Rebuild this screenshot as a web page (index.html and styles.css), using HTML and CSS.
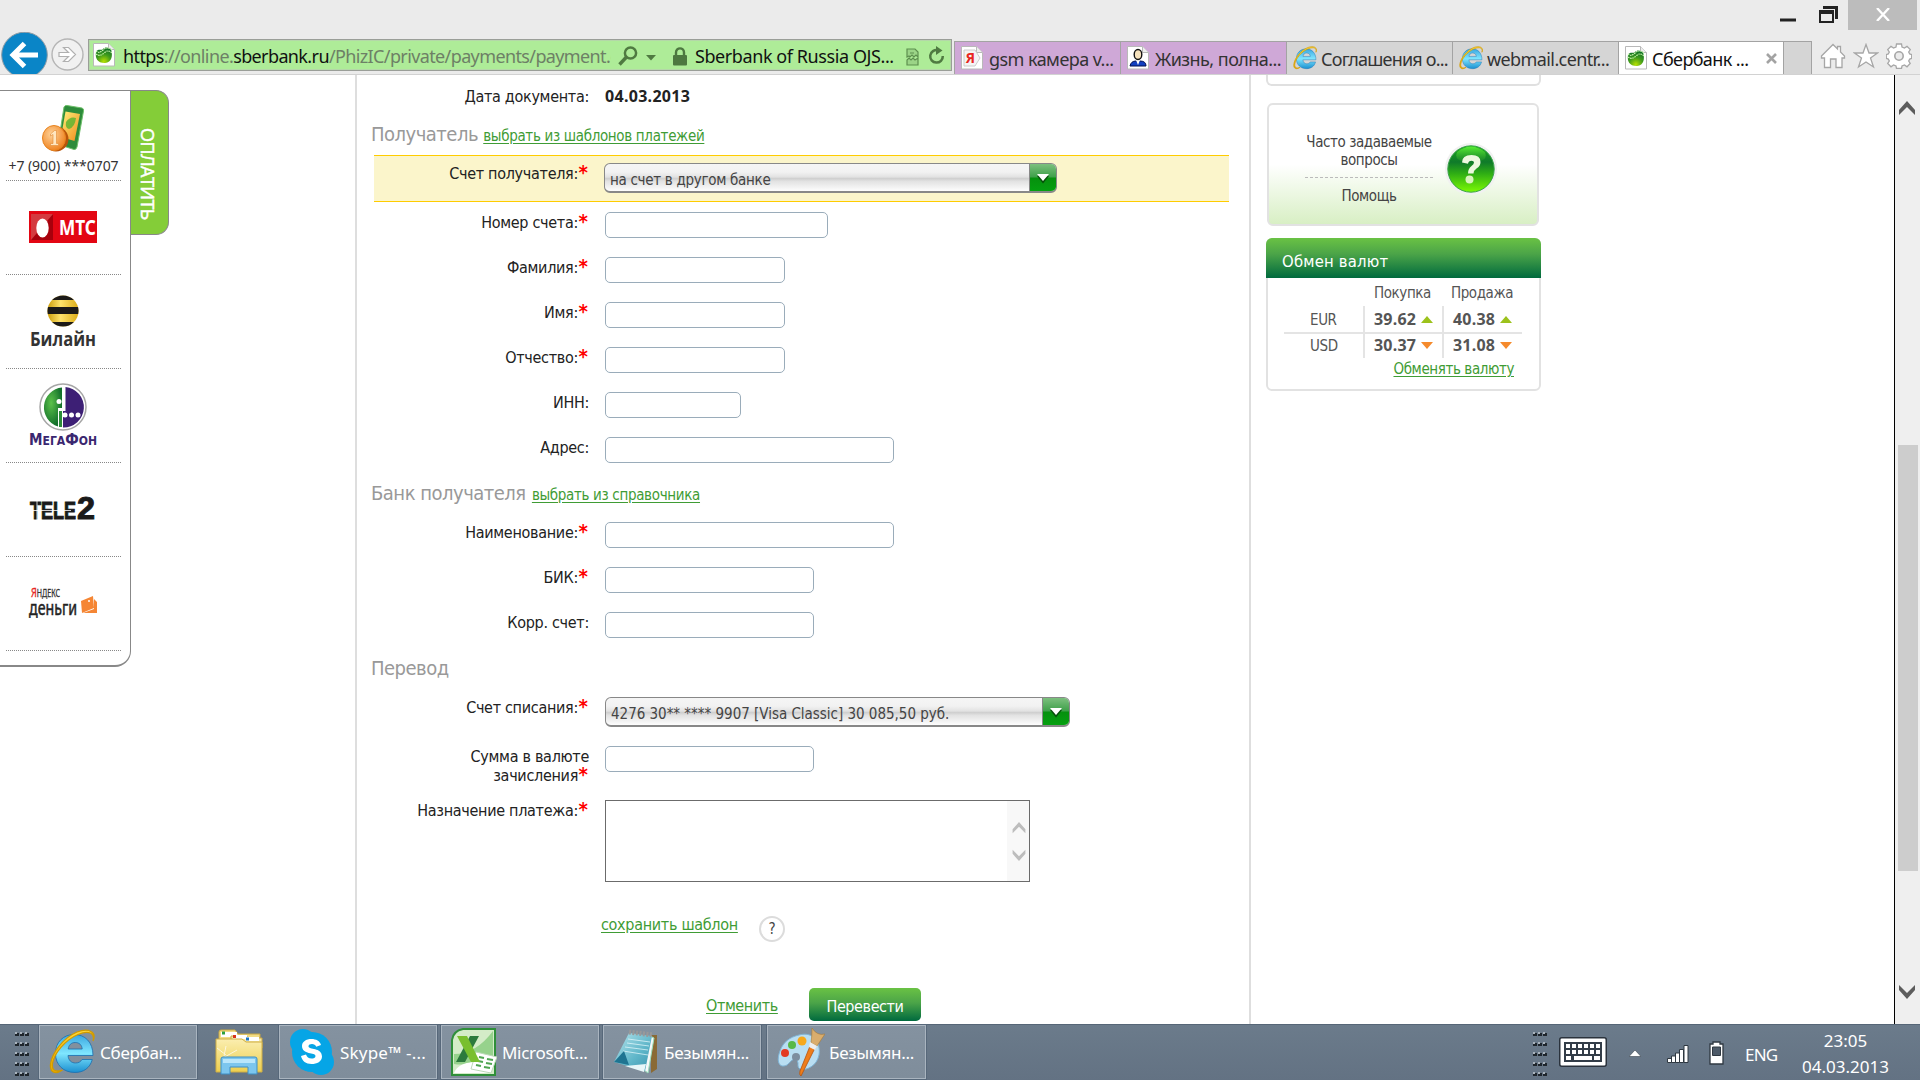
FILE: index.html
```html
<!DOCTYPE html>
<html lang="ru">
<head>
<meta charset="utf-8">
<title>Сбербанк ОнЛ@йн</title>
<link rel="stylesheet" href="styles.css">
</head>
<body>
<svg class="defs" width="0" height="0">
  <defs>
    <linearGradient id="gBlue" x1="0" y1="0" x2="0" y2="1"><stop offset="0" stop-color="#3aa6e0"/><stop offset=".5" stop-color="#7fe6ff"/><stop offset="1" stop-color="#1b8fd0"/></linearGradient>
    <linearGradient id="gGold" x1="0" y1="0" x2="0" y2="1"><stop offset="0" stop-color="#ffd83a"/><stop offset="1" stop-color="#e9a800"/></linearGradient>
    <radialGradient id="gBall" cx=".5" cy=".9" r=".9"><stop offset="0" stop-color="#b6e000"/><stop offset=".5" stop-color="#3f9b1c"/><stop offset="1" stop-color="#0c6b2a"/></radialGradient>
    <linearGradient id="gHelp" x1="0" y1="0" x2="0" y2="1"><stop offset="0" stop-color="#1fa81c"/><stop offset=".35" stop-color="#0f7a2a"/><stop offset=".6" stop-color="#2fae14"/><stop offset="1" stop-color="#7cfa05"/></linearGradient>
    <linearGradient id="gShine" x1="0" y1="0" x2="0" y2="1"><stop offset="0" stop-color="#58ee35"/><stop offset="1" stop-color="#2b9a2a" stop-opacity=".4"/></linearGradient>
    <linearGradient id="gFolder" x1="0" y1="0" x2="0" y2="1"><stop offset="0" stop-color="#fbeeb0"/><stop offset="1" stop-color="#edcf4f"/></linearGradient>
    <linearGradient id="gPad" x1="0" y1="0" x2="1" y2="1"><stop offset="0" stop-color="#b9e6ee"/><stop offset=".6" stop-color="#5fb6c9"/><stop offset="1" stop-color="#3a93ae"/></linearGradient>
    <linearGradient id="gPhone" x1="0" y1="0" x2="1" y2="1"><stop offset="0" stop-color="#fff27a"/><stop offset="1" stop-color="#f08a1d"/></linearGradient>
    <radialGradient id="gCoin" cx=".4" cy=".35" r=".7"><stop offset="0" stop-color="#ffd39a"/><stop offset="1" stop-color="#ee7f1a"/></radialGradient>
    <linearGradient id="gBee" x1="0" y1="0" x2="1" y2="0"><stop offset="0" stop-color="#c99a08"/><stop offset=".4" stop-color="#ffe36b"/><stop offset="1" stop-color="#d6a40c"/></linearGradient>
    <radialGradient id="gGreenM" cx=".4" cy=".4" r=".6"><stop offset="0" stop-color="#5cc24a"/><stop offset="1" stop-color="#13702b"/></radialGradient>
    <symbol id="ie" viewBox="0 0 46 46">
      <path d="M25 5.500C36 5.500 44 13 44 26.500H19c.4 5 3.500 7.500 7.500 7.500 3.300 0 5.300-1.400 6.500-3.500h10.300C41 39 34.500 43.500 26 43.500 14.500 43.500 6.500 36 6.500 24.500S14.500 5.500 25 5.500zM19.200 20h14c-.4-4.200-3-6.500-7-6.500s-6.600 2.500-7 6.500z" fill="url(#gBlue)" stroke="#1a6fb0" stroke-width=".8"/>
      <path d="M44 12C46 4 40 1 29 5.500 16 11 5.500 24 3.500 34.500 2.500 41 6 43.500 13.500 41 6 46 .5 43.500 1.500 35 3 24 14 9 28 3 40-1.500 48 3 44 12z" fill="url(#gGold)" stroke="#d09a00" stroke-width="1.200"/>
    </symbol>
    <symbol id="doc" viewBox="0 0 22 24"><path d="M.5.500h15l6 6v16.500H.5z" fill="#fff" stroke="#b9b9b9"/><path d="M15.500.500v6h6" fill="#eee" stroke="#b9b9b9"/></symbol>
    <symbol id="sb" viewBox="0 0 22 24"><use href="#doc"/><path d="M3 9c2-4 5-1 7-3s5-2 8 0c2 7 1 13-6 14C4 20 2 15 3 9z" fill="url(#gBall)"/><path d="M3 8q3 3 7-1t9 0M3 11q4 3 8-1t8 0" stroke="#cdf7b0" stroke-width="1.200" stroke-dasharray="1.500 .8" fill="none"/></symbol>
    <symbol id="chev" viewBox="0 0 18 15"><path d="M1 14v-5L9 0l8 9v5L9 6z"/></symbol>
    <symbol id="grip" viewBox="0 0 15 46">
      <g fill="#1f262d"><path id="gr" d="M0 2h4v3H0zm5 0h4v3H5zm5 0h4v3h-4z"/><use href="#gr" y="10"/><use href="#gr" y="20"/><use href="#gr" y="30"/><use href="#gr" y="40"/></g>
      <g fill="#a9b3bd"><path id="gl" d="M0 1h2v2H0zm5 0h2v2H5zm5 0h2v2h-2z"/><use href="#gl" y="10"/><use href="#gl" y="20"/><use href="#gl" y="30"/><use href="#gl" y="40"/></g>
    </symbol>
  </defs>
</svg>

<header class="chrome">
  <div class="titlebar">
    <svg class="min" width="16" height="4"><path d="M0 .500h16v3H0z" fill="#222"/></svg>
    <svg class="max" width="19" height="17"><path d="M4 0h15v13h-3V3H4zM0 4h15v13H0zm2 4v7h11V8z" fill="#222" fill-rule="evenodd"/></svg>
    <div class="close"><svg width="14" height="13"><path d="M1 0l12 13M13 0L1 13" stroke="#fff" stroke-width="2.300"/></svg></div>
  </div>
  <div class="navbar">
    <svg class="back" width="47" height="42" viewBox="0 0 47 42"><circle cx="23.500" cy="23" r="22.800" fill="#0a85c7" stroke="#8d9ba5"/><path d="M12 23h25M23.500 11.500L12 23l11.500 11.500" fill="none" stroke="#fff" stroke-width="5"/></svg>
    <svg class="fwd" width="33" height="33" viewBox="0 0 33 33"><circle cx="16.500" cy="16.500" r="15.500" fill="#f1f1f1" stroke="#b5b5b5" stroke-width="1.400"/><path d="M8 14.500h9.500L12.500 9.500h5l7 7-7 7h-5l5-5H8z" fill="#fff" stroke="#b0b0b0" stroke-width="1.200"/></svg>
    <div class="address">
      <svg class="fav" width="22" height="24"><use href="#sb"/></svg>
      <div class="url"><b>https</b>://online.<b>sberbank.ru</b>/PhizIC/private/payments/payment.do</div>
      <svg class="mag" width="20" height="20" viewBox="0 0 20 20"><circle cx="12.500" cy="7" r="5.600" fill="none" stroke="#4f7a41" stroke-width="2.500"/><path d="M8.500 11L1.500 18.500" stroke="#4f7a41" stroke-width="3.400"/></svg>
      <svg class="dd" width="10" height="6"><path d="M0 0h10L5 5.500z" fill="#4f7a41"/></svg>
      <svg class="lock" width="16" height="19" viewBox="0 0 16 19"><path d="M4 9V5.500C4 0 12 0 12 5.500V9" fill="none" stroke="#4d7840" stroke-width="2.400"/><rect x="1" y="8" width="14" height="10.500" rx="1" fill="#4d7840"/></svg>
      <span class="cert">Sberbank of Russia OJS...</span>
      <svg class="compat" width="13" height="18" viewBox="0 0 13 18"><path d="M1 9V1h8l3 3v5l-2-2-2 2-2-2-2 2-1-1zM1 17v-5l2-2 2 2 2-2 2 2 3-2v7z" fill="#9bd487" stroke="#5d8f4e" stroke-width="1.200"/><path d="M4 5h4" stroke="#5d8f4e"/></svg>
      <svg class="reload" width="17" height="19" viewBox="0 0 17 19"><path d="M10 4.200A6.300 6.300 0 1 0 14.800 10" fill="none" stroke="#4f7a41" stroke-width="2.500"/><path d="M8 0l6.500 4.500L8 9z" fill="#4f7a41"/></svg>
    </div>
    <nav class="tabs">
      <div class="tab violet t1"><svg width="22" height="24"><use href="#doc"/><path d="M3 4h11l5 8-5 8H3z" fill="#f4f4f4" stroke="#ccc"/><text x="4.500" y="17" class="ya">Я</text></svg><span>gsm камера v...</span></div>
      <div class="tab violet t2"><svg width="22" height="24"><use href="#doc"/><path d="M3 20q1-5 6-5h4q6 0 6 5z" fill="#1140c0" stroke="#001050"/><path d="M9 14h4l-2 5z" fill="#fff"/><ellipse cx="11" cy="8.500" rx="3.800" ry="5" fill="#f6e2bd" stroke="#111" stroke-width="1.400"/></svg><span>Жизнь, полна...</span></div>
      <div class="tab t3"><svg width="24" height="24"><use href="#ie"/></svg><span>Соглашения о...</span></div>
      <div class="tab t4"><svg width="24" height="24"><use href="#ie"/></svg><span>webmail.centr...</span></div>
      <div class="tab active t5"><svg width="22" height="24"><use href="#sb"/></svg><span>Сбербанк ...</span><svg class="tx" width="11" height="11"><path d="M1 1l9 9M10 1l-9 9" stroke="#a3a3a3" stroke-width="2.600"/></svg></div>
      <div class="tab newtab"></div>
    </nav>
    <div class="tools">
      <svg width="26" height="26" viewBox="0 0 26 26"><path d="M1.500 13L13 1.500l4.500 4.500V3.500h3V9l4 4v2h-2.500v9.500h-6V16h-5.500v8.500h-6V15h-3z" fill="#fff" stroke="#a6a6a6" stroke-width="1.300"/></svg>
      <svg width="26" height="26" viewBox="0 0 26 26"><path d="M13 1.500l3 8.500h8.500l-7 5 3 9L13 19l-7.500 5 3-9-7-5H10z" fill="#fff" stroke="#a6a6a6" stroke-width="1.300"/></svg>
      <svg width="26" height="26" viewBox="-13 -13 26 26"><path d="M-2.500-12h5l.5 3 2.500 1 2.500-1.700 3.300 3.300L9.700-4l1 2 2 .500v4l-2 .500-1 2 1.500 2.500L8 10.800 5.500 9 3 10l-.5 2.500h-5L-3 10l-2.500-1-2.500 1.800-3.300-3.300L-9.700 5l-1-2-2-.500v-4l2-.500 1-2-1.600-2.400L-8-9.700-5.500-8-3-9z" fill="#fff" stroke="#a6a6a6" stroke-width="1.300"/><circle r="4.200" fill="#ebebeb" stroke="#a6a6a6" stroke-width="1.600"/></svg>
    </div>
  </div>
</header>

<main class="view">
  <div class="left">
    <div class="pay">
      <div class="op first">
        <svg width="44" height="48" viewBox="0 0 44 48"><path d="M22 2q1-2 3-1.500L40 3q2 .5 1.500 3L35 42q-1 3-3 2.500L18 40q-2-1-1.500-3z" fill="#2d8b3a" stroke="#6fc06a"/><path d="M23.500 6.500L38 9l-5.500 27L19 32z" fill="url(#gPhone)"/><path d="M24 17q4-6 10-4-1 9-7 11-4-1-3-7z" fill="#55b32f" opacity=".8"/><ellipse cx="14" cy="34" rx="12.500" ry="12.500" fill="#b9540a"/><ellipse cx="12" cy="33" rx="11.500" ry="12.500" fill="url(#gCoin)" stroke="#e8841f"/><path d="M8.500 29l4-3.500h2v13h2v2h-8v-2h2.500v-9l-2.500 1.500z" fill="#ffe6c0" stroke="#e08a34" stroke-width=".6"/></svg>
        <span class="phone">+7 (900) ***0707</span>
      </div>
      <div class="op">
        <svg width="68" height="32"><path d="M0 0h68v32H0z" fill="#e30613"/><path d="M2 3h22v26H2z" fill="#a8000c"/><path d="M2 3h22L2 29z" fill="#d43a3f"/><ellipse cx="13.500" cy="17" rx="6.200" ry="9.500" fill="#fff"/><text x="30" y="23.500" class="mts" textLength="37" lengthAdjust="spacingAndGlyphs">МТС</text></svg>
      </div>
      <div class="op">
        <svg width="68" height="54"><clipPath id="cb"><circle cx="34" cy="17" r="15.500"/></clipPath><g clip-path="url(#cb)"><path d="M18 0h34v34H18z" fill="url(#gBee)"/><path d="M18 1h34v5H18zM18 13h34v7H18zM18 28h34v6H18z" fill="#1c1a18"/></g><text x="1" y="52" class="bee" textLength="66" lengthAdjust="spacingAndGlyphs">Билайн</text></svg>
      </div>
      <div class="op">
        <svg width="68" height="64"><circle cx="34" cy="24" r="23" fill="#fff" stroke="#a6a6a6" stroke-width="1.500"/><path d="M33 4.500V25h-4v18.500A20 20 0 0 1 33 4.500z" fill="url(#gGreenM)"/><path d="M36.500 4A20.300 20.300 0 0 1 34 44.500V28h2.500z" fill="#3d1f75"/><path d="M30 28h3v16h-3z" fill="#2b8d38"/><g fill="#fff"><circle cx="30" cy="18.500" r="2.500"/><circle cx="36" cy="32" r="2.500"/><circle cx="42.500" cy="32" r="2.500"/><circle cx="49" cy="32" r="2.500"/></g><text x="0" y="62" class="mega" textLength="68" lengthAdjust="spacingAndGlyphs">М<tspan class="sc">ЕГА</tspan>Ф<tspan class="sc">ОН</tspan></text></svg>
      </div>
      <div class="op tl">
        <svg width="68" height="28"><text x="1" y="26" class="tele" textLength="46" lengthAdjust="spacingAndGlyphs">TELE</text><text x="48" y="25.500" class="tele two" textLength="18" lengthAdjust="spacingAndGlyphs">2</text><path d="M0 17.500h42M8 8v20" stroke="#fff" stroke-width=".8"/></svg>
      </div>
      <div class="op">
        <svg width="68" height="34"><text x="2" y="11" class="yx" textLength="29" lengthAdjust="spacingAndGlyphs"><tspan class="yr">Я</tspan>НДЕКС</text><text x="0" y="28.500" class="yd" textLength="48" lengthAdjust="spacingAndGlyphs">деньги</text><path d="M52 15l12-5 1 12-12 5z" fill="#f58634"/><path d="M65 13l3 3v11H54l11-4z" fill="#f58634"/><circle cx="60" cy="15" r="1" fill="#fff"/></svg>
      </div>
    </div>
    <div class="paytab"><span>ОПЛАТИТЬ</span></div>
  </div>

  <section class="form">
    <div class="row date"><label>Дата документа:</label><strong>04.03.2013</strong></div>
    <h2 class="h1st">Получатель <a>выбрать из шаблонов платежей</a></h2>
    <div class="row hl"><label>Счет получателя:<i>*</i></label>
      <div class="select s1"><span>на счет в другом банке</span><em><svg width="12" height="10"><path d="M0 2h12L6 9.500z" fill="#064f0a"/><path d="M0 0h12L6 7z" fill="#fff"/></svg></em></div></div>
    <div class="row"><label>Номер счета:<i>*</i></label><input class="w223"></div>
    <div class="row"><label>Фамилия:<i>*</i></label><input class="w180"></div>
    <div class="row"><label>Имя:<i>*</i></label><input class="w180"></div>
    <div class="row"><label>Отчество:<i>*</i></label><input class="w180"></div>
    <div class="row"><label>ИНН:</label><input class="w136"></div>
    <div class="row"><label>Адрес:</label><input class="w289"></div>
    <h2 class="bank">Банк получателя <a>выбрать из справочника</a></h2>
    <div class="row"><label>Наименование:<i>*</i></label><input class="w289"></div>
    <div class="row"><label>БИК:<i>*</i></label><input class="w209"></div>
    <div class="row"><label>Корр. счет:</label><input class="w209"></div>
    <h2>Перевод</h2>
    <div class="row from"><label>Счет списания:<i>*</i></label>
      <div class="select s2"><span>4276 30** **** 9907 [Visa Classic] 30 085,50 руб.</span><em><svg width="12" height="10"><path d="M0 2h12L6 9.500z" fill="#064f0a"/><path d="M0 0h12L6 7z" fill="#fff"/></svg></em></div></div>
    <div class="row sum"><label>Сумма в валюте<br>зачисления<i>*</i></label><input class="w209"></div>
    <div class="row purpose"><label>Назначение платежа:<i>*</i></label>
      <div class="area"><div class="ascroll"><svg width="16" height="12"><use href="#chev"/></svg><svg class="down" width="16" height="12"><use href="#chev"/></svg></div></div></div>
    <div class="save"><a>сохранить шаблон</a><span class="q">?</span></div>
    <div class="actions"><a>Отменить</a><button>Перевести</button></div>
  </section>

  <aside class="right">
    <div class="stub"></div>
    <div class="faq">
      <div class="faqtext"><p>Часто задаваемые<br>вопросы</p><p class="help">Помощь</p></div>
      <svg width="54" height="54" viewBox="0 0 54 54"><circle cx="27" cy="27" r="26" fill="#f1f1f1"/><circle cx="27" cy="27" r="23.200" fill="url(#gHelp)" stroke="#3aa34b"/><path d="M13 10Q27-1 41 10q3 8-6 9H19q-9-1-6-9z" fill="url(#gShine)"/><path d="M18 20.500q0-7.500 9.500-7.500 9 0 9 7 0 4-4 6.500-3 2-3 5h-5.500q0-5 3.500-7.500 2.500-1.700 2.500-3.500t-2.500-1.800q-3 0-3.500 3z" fill="#edf8df"/><circle cx="25.500" cy="37.500" r="4" fill="#d9f3bf"/></svg>
    </div>
    <div class="rates">
      <h3>Обмен валют</h3>
      <div class="grid">
        <span></span><span class="hd">Покупка</span><span class="hd">Продажа</span>
        <span class="cur">EUR</span><span class="val"><b>39.62</b><svg width="12" height="7"><path d="M0 7l6-7 6 7z" fill="#9cc21c"/></svg></span><span class="val"><b>40.38</b><svg width="12" height="7"><path d="M0 7l6-7 6 7z" fill="#9cc21c"/></svg></span>
        <span class="cur low">USD</span><span class="val low"><b>30.37</b><svg width="12" height="7"><path d="M0 0l6 7 6-7z" fill="#f58a2c"/></svg></span><span class="val low"><b>31.08</b><svg width="12" height="7"><path d="M0 0l6 7 6-7z" fill="#f58a2c"/></svg></span>
      </div>
      <a>Обменять валюту</a>
    </div>
  </aside>

  <div class="scrollbar"><svg width="18" height="15"><use href="#chev"/></svg><div class="thumb"></div><svg class="down" width="18" height="15"><use href="#chev"/></svg></div>
</main>

<footer class="taskbar">
  <svg class="g1" width="15" height="46"><use href="#grip"/></svg>
  <div class="task"><svg width="46" height="46"><use href="#ie"/></svg><span>Сбербан...</span></div>
  <svg class="explorer" width="48" height="48" viewBox="0 0 48 48"><path d="M4 12V4q0-2 2-2h14l3 4h22v20z" fill="#f2dc85" stroke="#c9a845"/><path d="M6 4h16v5H6z" fill="#fff"/><path d="M7 3.500h3v3H7z" fill="#2c9e3f"/><path d="M16 8h15l3 2h13v10H16z" fill="#f6e7a4" stroke="#c9a845"/><path d="M18 7h14v4H18z" fill="#fff"/><path d="M18 7h3v3h-3z" fill="#d8321a"/><path d="M1 11h26l4 3h16v30H1z" fill="url(#gFolder)" stroke="#cfae45"/><path d="M30 9h14v4H31z" fill="#fff"/><path d="M31 9.500h3v3h-3z" fill="#1b76c4"/><path d="M11 18l-2 10M2 20l9 7M22 22l-14 8" stroke="#fff" stroke-width="1" opacity=".7"/><path d="M6 31q0-2 2-2h32q2 0 2 2v15h-9v-7H15v7H6z" fill="#7cc6ee" stroke="#3f8fc4"/><path d="M8 31h32v4H8z" fill="#b9e6fb"/></svg>
  <div class="task"><svg width="46" height="46" viewBox="0 0 46 46"><circle cx="23" cy="23" r="20" fill="#06a5e6"/><circle cx="14" cy="13" r="13" fill="#06a5e6"/><circle cx="32" cy="33" r="13" fill="#06a5e6"/><path d="M32 16c-1-4-5-6-9.500-6-5.500 0-9.500 2.700-9.500 7 0 9 13.500 6 13.500 10 0 2-2 2.500-4 2.500-3 0-4.500-1.500-5.500-4l-5 1.500c1 5 5 8 10.500 8S33 32.500 33 27.500c0-9.500-13.500-6.500-13.500-10.300 0-1.500 1.500-2.200 3.500-2.200s3.500.8 4.200 2.700z" fill="#fff"/></svg><span class="sk">Skype™ -...</span></div>
  <div class="task"><svg width="46" height="48" viewBox="0 0 46 48"><path d="M12 1h32v46H1V12Q2 3 12 1z" fill="#d4ecc8" stroke="#2f8f3a" stroke-width="2"/><path d="M3 26Q25 26 42 3v26q-10-3-18 3t-21 4z" fill="#7cc772" opacity=".7"/><path d="M3 45q4-10 20-11l16 11z" fill="#fff"/><path d="M25 24l21 5-6 16-20-4z" fill="#fff" stroke="#bcd9b8"/><path d="M28 29l5 1M36 31l6 1M27 33l5 1M35 35l6 1M25 37l5 1M33 39l6 1" stroke="#4fa552" stroke-width="2.200"/><path d="M19 8h9L14 34H5z" fill="#2c7a3d"/><path d="M6 8h10l13 26h-9z" fill="#79bf2f"/></svg><span>Microsoft...</span></div>
  <div class="task"><svg width="46" height="48" viewBox="0 0 46 48"><path d="M38 7h6v34l-6 4z" fill="#8a6a35"/><path d="M37 8l4 2-6 35-4-3z" fill="#f6f8f8" stroke="#9db"/><path d="M16 5l23 3-7 35L1 34z" fill="url(#gPad)"/><path d="M15 11l22 3M14 15l22 3M12 19l23 3M10 23l25 4" stroke="#eafcff" stroke-width="1" opacity=".7"/><path d="M1 34l10-11 5 14z" fill="#1f7491"/><path d="M16 4l24 3" stroke="#999" stroke-width="5" stroke-dasharray="2 1.500"/><path d="M12 38l19 6 2-8z" fill="#e8f6f8"/></svg><span>Безымян...</span></div>
  <div class="task wide"><svg width="48" height="48" viewBox="0 0 48 48"><path d="M22 7C36 3 44 14 42 27c-2 11-13 16-19 14-4-2 0-7-4-9s-6 3-9 5C2 41-1 33 3 23 6 14 13 9 22 7z" fill="#b9def2" stroke="#7fb4d6"/><circle cx="19" cy="29" r="4" fill="#7d8e9f"/><circle cx="8" cy="25" r="4" fill="#e33a22"/><circle cx="15" cy="17" r="4" fill="#58b947"/><circle cx="25" cy="13" r="4.500" fill="#f7a81a"/><path d="M33 18l5 2-14 28q-2-1-1-5z" fill="#ee7e1c" stroke="#b5530c" stroke-width=".8"/><path d="M34 15l6 3 8-12q-8 2-13-6 0 8-1 15z" fill="#d9ad6d" stroke="#a67838" stroke-width=".6"/><path d="M33 14l7 4-2 4-6-3z" fill="#eee"/></svg><span class="bz">Безымян...</span></div>
  <div class="tray">
    <svg width="15" height="46"><use href="#grip"/></svg>
    <svg class="kb" width="48" height="30"><rect x=".75" y=".75" width="46.500" height="28.500" rx="2" fill="#fff" stroke="#2a323c" stroke-width="1.500"/><path d="M5 5h38v20H5z" fill="#333d48"/><path d="M7 9h34M7 15h34" stroke="#fff" stroke-width="4" stroke-dasharray="4 2"/><path d="M7 21h5M15 21h18M35 21h6" stroke="#fff" stroke-width="4"/></svg>
    <svg class="up" width="12" height="7"><path d="M0 6.500L6 0l6 6.500z" fill="#fff" stroke="#39434e" stroke-width=".6"/></svg>
    <svg class="sig" width="22" height="18"><g fill="#fff" stroke="#2f3841"><path d="M.5 13.500h4v4h-4zM4.500 11h4v6.500h-4zM8.500 8h4v9.500h-4zM12.500 4.500h4v13h-4zM17 .500h4v17h-4z"/></g></svg>
    <svg class="bat" width="15" height="24"><path d="M4 3V1h7v2h3v20H1V3z" fill="#fff" stroke="#2f3841" stroke-width="1.300"/><path d="M3.500 6h8v8.500h-8z" fill="#4d5a68" stroke="#2f3841"/></svg>
    <span class="lang">ENG</span>
    <div class="clock">23:05<br>04.03.2013</div>
  </div>
</footer>
</body>
</html>
```
FILE: styles.css
```css
* { box-sizing: border-box; }
body { margin: 0; width: 1920px; height: 1080px; overflow: hidden; display: flex; flex-direction: column; background: #fff; font-family: "DejaVu Sans Condensed", "DejaVu Sans", sans-serif; color: #222; }
svg { display: block; flex: none; }
.defs { position: absolute; }
p, h2, h3 { margin: 0; font-weight: normal; }
a { color: #3f9c35; text-decoration: underline; text-underline-offset: 2px; }

/* browser frame */
.chrome { height: 75px; flex: none; background: #ebebeb; border-bottom: 1px solid #d2d2d2; font: 18px/24px "Noto Sans", sans-serif; letter-spacing: -.55px; }
.titlebar { height: 32px; display: flex; align-items: flex-start; padding-left: 1780px; }
.min { margin-top: 18px; }
.max { margin: 6px 10px 0 23px; }
.close { width: 69px; height: 30px; background: #bcbcbc; display: flex; justify-content: center; padding-top: 8px; }
.navbar { display: flex; height: 42px; align-items: flex-start; padding-left: 1px; }
.fwd { margin: 6px 4px 0 3px; }
.address { width: 864px; height: 32px; margin-top: 7px; border: 1px solid #9a9e98; background: #aeec98; box-shadow: inset 0 0 0 1px #b4d8a8; display: flex; align-items: flex-start; padding: 3px 0 0 4px; color: #111; white-space: nowrap; }
.fav { margin-right: 8px; }
.url { width: 488px; overflow: hidden; color: #6d8066; letter-spacing: -.62px; line-height: 27px; }
.url b { font-weight: normal; color: #111; }
.mag { margin: 3px 7px 0; }
.dd { margin: 12px 16px 0 1px; }
.lock { margin: 4px 7px 0 0; }
.cert { width: 201px; letter-spacing: -.42px; line-height: 27px; }
.compat { margin: 5px 9px 0 10px; }
.reload { margin-top: 3px; }
.tabs { display: flex; height: 33px; margin: 9px 0 0 2px; border-top: 1px solid #a3a3a3; }
.tab { display: flex; border-left: 1px solid #a3a3a3; background: #d5d5d5; padding: 4px 0 0 6px; color: #333; white-space: nowrap; overflow: hidden; }
.tab span { margin-left: 5px; line-height: 26px; }
.violet { background: #cfa8d7; }
.violet span { margin-left: 6px; }
.t1 { width: 166px; } .t2 { width: 166px; } .t3 { width: 166px; } .t4 { width: 166px; } .t5 { width: 165px; }
.t3 span, .t4 span { letter-spacing: -.6px; margin-left: 4px; }
.t3 span { letter-spacing: -.78px; }
.active { background: #fff; color: #111; }
.active span { width: 108px; letter-spacing: -.6px; }
.tx { margin: 7px 0 0 6px; }
.newtab { width: 29px; border-right: 1px solid #a3a3a3; }
.tools { display: flex; gap: 7px; margin: 11px 0 0 8px; }
.ya { font: bold 14px "Noto Sans", sans-serif; fill: #e8271f; }

.view { flex: 1; min-height: 0; display: flex; overflow: hidden; }

/* quick payments */
.left { width: 355px; flex: none; display: flex; align-items: flex-start; padding-top: 15px; }
.pay { width: 131px; height: 577px; border: solid #888; border-width: 1px 1px 2px 0; border-radius: 0 0 16px 0; padding-left: 6px; }
.op { width: 115px; height: 94px; border-bottom: 1px dotted #888; display: flex; flex-direction: column; align-items: center; justify-content: center; padding: 0 2px 2px 0; }
.op svg { overflow: visible; }
.op.first { height: 90px; justify-content: flex-start; padding: 14px 0 0; }
.op.tl { padding-bottom: 5px; }
.phone { font: 14px/20px "Noto Sans", sans-serif; color: #333; margin-top: 3px; white-space: nowrap; letter-spacing: -.05px; }
.mts { font: bold 21px "Noto Sans", sans-serif; fill: #fff; }
.bee { font: bold 20px "Open Sans", sans-serif; fill: #333; }
.mega { font: bold 15px "DejaVu Sans", sans-serif; fill: #3a2770; }
.sc { font-size: 12px; }
.tele { font: bold 24px "Liberation Sans", sans-serif; fill: #1a1a1a; stroke: #1a1a1a; stroke-width: 1px; }
.two { font-size: 31px; }
.yx { font: 10px "Noto Sans", sans-serif; fill: #333; stroke: #333; stroke-width: .3px; }
.yr { font-size: 13px; fill: #e8271f; stroke: #e8271f; }
.yd { font: 19px "Noto Sans", sans-serif; fill: #222; stroke: #222; stroke-width: .5px; }
.paytab { width: 38px; height: 145px; background: #84cd38; border: 1px solid #888; border-left: 0; border-radius: 0 13px 13px 0; display: flex; align-items: center; justify-content: center; }
.paytab span { writing-mode: vertical-rl; font: 18px/20px "Open Sans", sans-serif; color: #fff; letter-spacing: -.55px; padding-top: 23px; margin-right: 4px; -webkit-text-stroke: .5px #fff; }

/* payment form */
.form { width: 896px; flex: none; border: solid #dedede; border-width: 0 2px; letter-spacing: -.3px; }
.row { display: grid; grid-template-columns: 232px auto; column-gap: 16px; justify-content: start; align-items: start; height: 45px; padding-top: 10px; font-size: 16px; }
.row label { text-align: right; line-height: 20px; padding-top: 1px; }
.row i { color: #f00; font: bold 20px/10px "DejaVu Sans Condensed", sans-serif; display: inline-block; width: 10px; letter-spacing: 0; margin-right: 1px; }
.date { height: 38px; padding-top: 11px; }
.date strong { font: bold 16px/20px "Noto Sans", sans-serif; letter-spacing: .3px; }
.form h2 { height: 40px; padding: 11px 0 0 14px; font-size: 20px; line-height: 20px; color: #999; letter-spacing: -.5px; white-space: pre; }
.form h2.h1st { height: 42px; }
.form h2.bank a { margin-left: 1px; }
.form h2 a { font-size: 15px; letter-spacing: -.33px; }
.hl { height: 47px; margin: 0 20px 0 17px; grid-template-columns: 215px auto; padding-top: 7px; background: #fbf5cb; border: solid #ffcc00; border-width: 1px 0; column-gap: 15px; }
input { height: 26px; border: 1px solid #9aacba; border-radius: 5px; background: #fff; padding: 0; display: block; }
.w223 { width: 223px; } .w180 { width: 180px; } .w136 { width: 136px; } .w289 { width: 289px; } .w209 { width: 209px; }
.select { height: 30px; display: flex; border: 1px solid #888; border-bottom-width: 2px; border-radius: 6px; overflow: hidden; background: linear-gradient(#f5f5f5 0, #f2f2f2 30%, #e2e2e2 48%, #cfcfcf 54%, #e2e2e2 64%, #fdfdfd 100%); font-size: 15px; color: #444; }
.select span { flex: 1; padding-left: 5px; line-height: 32px; white-space: nowrap; }
.select em { width: 27px; border-left: 1px solid #888; background: linear-gradient(#7cc07e 0, #3fa04a 48%, #06900e 52%, #05a010 100%); display: flex; align-items: center; justify-content: center; padding-top: 2px; }
.s1 { width: 453px; }
.s2 { width: 465px; letter-spacing: -.02px; }
.from { height: 49px; }
.sum { height: 54px; }
.sum label { line-height: 19px; }
.purpose { height: 103px; }
.area { width: 425px; height: 82px; border: 1px solid #6b6b6b; display: flex; justify-content: flex-end; }
.ascroll { width: 22px; background: #f8f8f8; display: flex; flex-direction: column; align-items: center; padding: 21px 0 0 1px; gap: 15px; fill: #bdbdbd; }
.down { transform: scaleY(-1); }
.save { display: flex; align-items: flex-start; padding: 22px 0 0 244px; font-size: 16px; line-height: 20px; height: 79px; }
.q { width: 26px; height: 26px; border: 2px solid #dcdcdc; border-radius: 50%; margin: 1px 0 0 21px; text-align: center; line-height: 22px; font-size: 15px; color: #444; }
.actions { display: flex; align-items: flex-start; padding: 16px 0 0 349px; font-size: 16px; height: 52px; line-height: 36px; }
.actions a { width: 103px; letter-spacing: -.4px; }
.actions a, .save a { white-space: nowrap; }
button { width: 112px; height: 33px; border: 0; border-radius: 5px; background: linear-gradient(#6ac244, #4ba448 45%, #006a3e); color: #fff; font: 16px/37px "DejaVu Sans Condensed", sans-serif; letter-spacing: -.4px; padding: 0; }

/* side panels */
.right { width: 275px; flex: none; margin-left: 15px; letter-spacing: -.4px; font-size: 15px; color: #444; }
.stub { height: 11px; border: 2px solid #e0e0e0; border-top: 0; border-radius: 0 0 6px 6px; }
.faq { width: 272px; height: 123px; margin: 17px 0 0 1px; border: 2px solid #e2e2e2; border-radius: 6px; background: linear-gradient(#fff 50%, #d8efc4); display: flex; padding: 28px 0 0 36px; }
.faqtext { width: 128px; text-align: center; line-height: 18px; }
.faqtext p { white-space: nowrap; letter-spacing: -.42px; }
.help { margin-top: 8px; border-top: 1px dashed #bbb; padding-top: 9px; }
.faq svg { margin: 9px 0 0 11px; }
.rates { height: 153px; margin-top: 12px; border: 2px solid #e2e2e2; border-radius: 6px; }
.rates h3 { height: 40px; margin: -2px -2px 0; border-radius: 6px 6px 0 0; background: linear-gradient(#6ac244, #4ba448 40%, #006a3e); color: #fff; font-size: 16.500px; line-height: 47px; padding-left: 16px; letter-spacing: .2px; }
.grid { display: grid; grid-template-columns: 79px 79px 80px; grid-template-rows: 28px 26px 26px; margin-left: 16px; }
.hd { text-align: center; padding-top: 5px; line-height: 20px; }
.cur { padding: 4px 0 0 26px; line-height: 20px; }
.val { border-left: 2px solid #e4e4e4; padding: 4px 0 0 9px; display: flex; line-height: 20px; }
.val b { font: bold 16px/20px "Noto Sans", sans-serif; letter-spacing: .2px; width: 47px; }
.val b { margin-top: -1px; }
.val svg { margin-top: 6px; }
.low { border-top: 2px solid #e4e4e4; padding-top: 2px; }
.rates a { display: block; text-align: right; padding-right: 25px; line-height: 22px; }
.hd, .cur, .val { color: #555; }

.scrollbar { margin-left: auto; width: 26px; border-left: 1px solid #000; background: #efefef; display: flex; flex-direction: column; align-items: flex-start; padding: 26px 0 25px 3px; fill: #5c5c5c; }
.thumb { width: 20px; height: 426px; background: #cdcdcd; margin: 329px 0 auto; }

/* taskbar */
.taskbar { height: 56px; flex: none; background: linear-gradient(#6b7b8b, #637283); border-top: 1px solid #566677; display: flex; align-items: flex-start; padding-left: 15px; color: #fff; font: 17px/24px "Noto Sans", sans-serif; letter-spacing: -.3px; }
.g1 { margin: 6px 9px 0 0; }
.task { width: 158px; height: 54px; border: 1px solid #a9b4bf; outline: 1px solid #57687a; background: linear-gradient(#8492a0, #7f8d9b); display: flex; align-items: center; padding-left: 9px; margin-right: 4px; white-space: nowrap; }
.task span { margin-left: 5px; padding-top: 2px; }
.task .sk { margin-left: 5px; letter-spacing: .2px; }
.wide { width: 159px; margin-left: 2px; }
.task .bz { margin-left: 4px; }
.explorer { margin: 3px 16px 0 14px; }
.tray { display: flex; margin-left: auto; align-items: flex-start; }
.tray > svg:first-child { margin: 6px 11px 0 0; }
.kb { margin-top: 12px; }
.up { margin: 25px 26px 0 22px; }
.sig { margin-top: 20px; }
.bat { margin: 16px 21px 0 20px; }
.lang { width: 57px; margin-top: 18px; letter-spacing: -.8px; }
.clock { width: 87px; text-align: center; line-height: 26px; margin: 3px 31px 0 0; white-space: nowrap; letter-spacing: 0; }
```
